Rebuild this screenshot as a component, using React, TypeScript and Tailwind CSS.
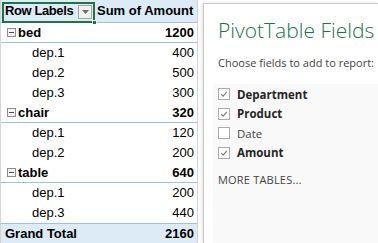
import React from "react";

type Row = { label: string; value: number; kind: "group" | "item" };

const rows: Row[] = [
  { label: "bed", value: 1200, kind: "group" },
  { label: "dep.1", value: 400, kind: "item" },
  { label: "dep.2", value: 500, kind: "item" },
  { label: "dep.3", value: 300, kind: "item" },
  { label: "chair", value: 320, kind: "group" },
  { label: "dep.1", value: 120, kind: "item" },
  { label: "dep.2", value: 200, kind: "item" },
  { label: "table", value: 640, kind: "group" },
  { label: "dep.1", value: 200, kind: "item" },
  { label: "dep.3", value: 440, kind: "item" },
];

const fields = [
  { name: "Department", checked: true },
  { name: "Product", checked: true },
  { name: "Date", checked: false },
  { name: "Amount", checked: true },
];

function MinusBox() {
  return (
    <span className="w-[9px] h-[9px] border border-[#8c8c8c] bg-[#f4f4f4] flex items-center justify-center mr-[2px]">
      <span className="w-[5px] h-px bg-[#4a4a4a]" />
    </span>
  );
}

function Check({ checked }: { checked: boolean }) {
  return (
    <span className="w-[12px] h-[12px] border border-[#ababab] bg-white flex items-center justify-center">
      {checked && (
        <svg width="8" height="8" viewBox="0 0 8 8">
          <path d="M1.2 4.2 L3.1 6.1 L6.8 1.8" stroke="#7a7a7a" strokeWidth="1.1" fill="none" />
        </svg>
      )}
    </span>
  );
}

export default function App() {
  return (
    <div className="w-[378px] h-[243px] overflow-hidden bg-white flex">
      <div className="w-[198px] shrink-0 border-l border-r border-[#d4d4d4] font-['Liberation_Sans',Arial,sans-serif] text-[13px] text-black">
        <div className="relative h-[23px] bg-[#ddebf7] border-b border-[#9bc2e6] flex items-center font-bold">
          <div className="w-[95px] pl-[4px] flex items-center tracking-[-0.4px]">Row Labels</div>
          <div className="flex-1 pl-[1px]">Sum of Amount</div>
          <span className="absolute left-[77px] top-[5px] w-[14px] h-[14px] border border-[#a6a6a6] bg-[#f0f0f0] flex items-center justify-center">
            <svg width="7" height="4" viewBox="0 0 7 4">
              <path d="M0 0 H7 L3.5 4 Z" fill="#6d6d6d" />
            </svg>
          </span>
          <span className="absolute left-[1px] top-[2px] w-[93px] h-[21px] border-2 border-[#217346]" />
          <span className="absolute left-[91px] top-[20px] w-[5px] h-[5px] bg-[#217346] border border-white" />
        </div>
        {rows.map((r, i) => (
          <div
            key={i}
            className={
              r.kind === "group"
                ? "h-[20px] flex items-center font-bold border-b border-[#9bc2e6]"
                : "h-[20px] flex items-center"
            }
          >
            {r.kind === "group" ? (
              <div className="w-[95px] pl-[6px] flex items-center">
                <MinusBox />
                {r.label}
              </div>
            ) : (
              <div className="w-[95px] pl-[31px]">{r.label}</div>
            )}
            <div className="flex-1 text-right pr-[3px]">{r.value}</div>
          </div>
        ))}
        <div className="h-[21px] flex items-center font-bold bg-[#ddebf7] border-t border-[#9bc2e6]">
          <div className="w-[95px] pl-[4px]">Grand Total</div>
          <div className="flex-1 text-right pr-[3px]">2160</div>
        </div>
      </div>
      <div className="w-[5px] shrink-0" />
      <div className="flex-1 mt-[3px] border-l border-t border-[#c8c8c8] shadow-[-1px_0_3px_rgba(0,0,0,0.12)] bg-white font-['Open_Sans','Noto_Sans',sans-serif] flex flex-col">
        <div className="pl-[14px] pt-[12px] text-[21px] font-light text-[#217346] leading-[28px] whitespace-nowrap">
          PivotTable Fields
        </div>
        <div className="pl-[14px] mt-[11px] text-[11px] text-[#444444] whitespace-nowrap">
          Choose fields to add to report:
        </div>
        <div className="ml-[9px] mt-[12px] flex-1 bg-[#f9f9f9] pl-[5px] pt-[1px] flex flex-col">
          {fields.map((f) => (
            <div key={f.name} className="h-[19.5px] flex items-center gap-[7px]">
              <Check checked={f.checked} />
              <span className={f.checked ? "text-[11.5px] font-bold text-[#262626]" : "text-[11.5px] text-[#444444]"}>{f.name}</span>
            </div>
          ))}
          <div className="mt-[9px] text-[11px] text-[#444444] tracking-[0.2px]">MORE TABLES...</div>
        </div>
      </div>
    </div>
  );
}
